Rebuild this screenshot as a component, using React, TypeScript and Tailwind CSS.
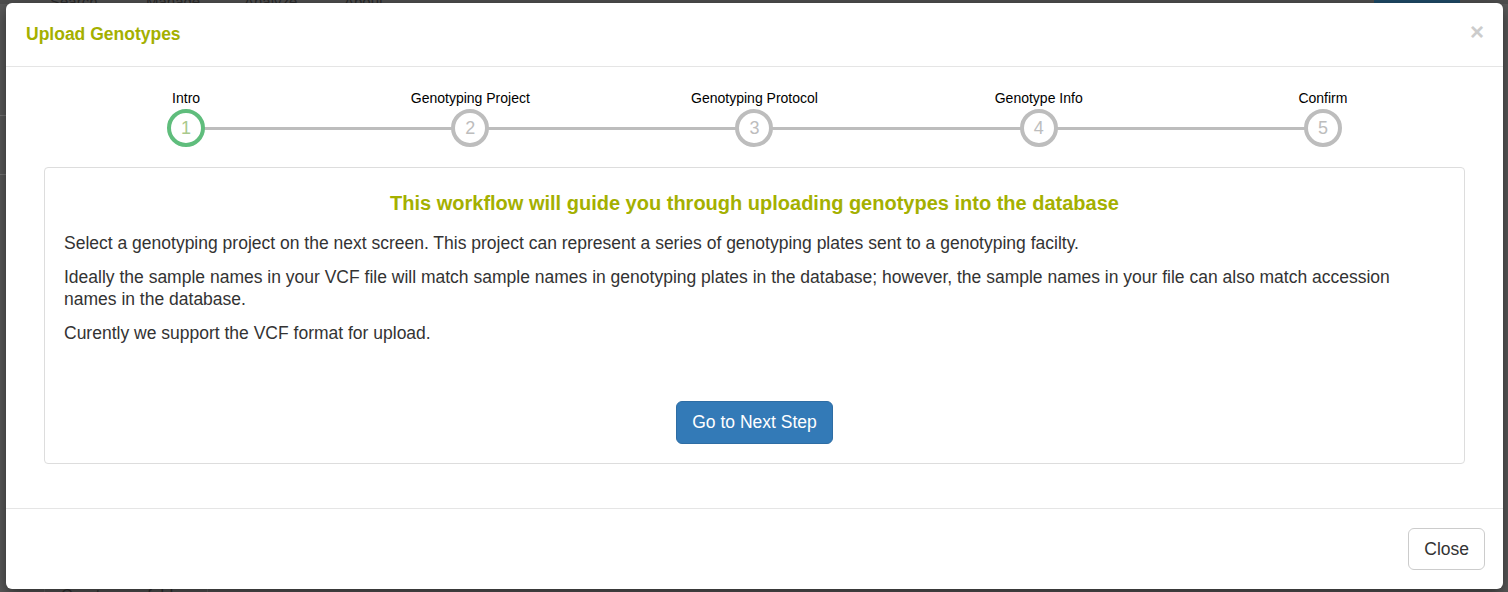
import React from "react";

const steps = ["Intro", "Genotyping Project", "Genotyping Protocol", "Genotype Info", "Confirm"];

export default function App() {
  return (
    <div
      className="relative w-[1508px] h-[592px] overflow-hidden bg-[#5a5a5a]"
      style={{ fontFamily: '"Liberation Sans", Arial, sans-serif' }}
    >
      {/* dimmed page behind */}
      <div className="flex h-[4px] items-end bg-[#4e4e4e]">
        <div className="flex pl-[50px] text-[15px] leading-[4px] text-[#2a2a2a]">
          <span className="w-[96px]">Search</span>
          <span className="w-[98px]">Manage</span>
          <span className="w-[100px]">Analyze</span>
          <span>About</span>
        </div>
        <div className="ml-auto mr-[48px] h-[4px] w-[86px] bg-[#1f4a66]" />
      </div>
      <div className="absolute left-0 top-[115px] h-px w-[6px] bg-[#777]" />
      <div className="absolute left-0 top-[174px] h-px w-[6px] bg-[#777]" />
      <div className="absolute left-[44px] top-[586px] h-[10px] w-[164px] border border-[#6a6a6a]">
        <span className="block pl-[16px] pt-[1px] text-[16px] leading-[16px] text-[#333]">Create new folder</span>
      </div>

      {/* modal */}
      <div className="absolute left-[6px] top-[3px] flex h-[586px] w-[1497px] flex-col rounded-[6px] bg-white shadow-[0_5px_15px_rgba(0,0,0,0.5)]">
        <div className="flex h-[64px] items-center justify-between border-b border-[#e5e5e5] pl-[20px] pr-[19px]">
          <h4 className="text-[17.5px] font-bold text-[#a4b000]">Upload Genotypes</h4>
          <span className="-mt-[6px] text-[24px] font-bold leading-none text-[#cccccc]">×</span>
        </div>

        <div className="px-[38px] pt-[23px]">
          <div className="relative grid grid-cols-5">
            <div className="absolute left-[10%] right-[10%] top-[37px] h-[3px] bg-[#bdbdbd]" />
            {steps.map((s, i) => (
              <div key={s} className="relative flex flex-col items-center">
                <div className="h-[16px] text-[14px] leading-[16px] text-black">{s}</div>
                <div
                  className={
                    "mt-[3px] flex h-[38px] w-[38px] items-center justify-center rounded-full border-[4px] bg-white text-[18px] " +
                    (i === 0 ? "border-[#5fbd7c] text-[#a9c98c]" : "border-[#bdbdbd] text-[#bdbdbd]")
                  }
                >
                  {i + 1}
                </div>
              </div>
            ))}
          </div>

          <div className="mt-[20px] rounded-[4px] border border-[#dddddd] px-[19px] pb-[19px] pt-[23px]">
            <h3 className="text-center text-[20px] font-bold leading-[24px] text-[#a4b000]">
              This workflow will guide you through uploading genotypes into the database
            </h3>
            <div className="mt-[17px] text-[17.5px] leading-[22px] text-[#333333]">
              <p className="mb-[12px]">
                Select a genotyping project on the next screen. This project can represent a series of genotyping plates sent to a genotyping facilty.
              </p>
              <p className="mb-[12px] pr-[40px]">
                Ideally the sample names in your VCF file will match sample names in genotyping plates in the database; however, the sample names in your file can also match accession names in the database.
              </p>
              <p>Curently we support the VCF format for upload.</p>
            </div>
            <div className="mt-[57px] flex justify-center">
              <button className="h-[43px] rounded-[6px] border border-[#2e6da4] bg-[#337ab7] px-[15px] text-[17.5px] text-white">
                Go to Next Step
              </button>
            </div>
          </div>
        </div>

        <div className="mt-auto flex h-[81px] items-center justify-end border-t border-[#e5e5e5] pr-[18px]">
          <button className="h-[42px] rounded-[6px] border border-[#cccccc] bg-white px-[15px] text-[17.5px] text-[#333333]">
            Close
          </button>
        </div>
      </div>
    </div>
  );
}
